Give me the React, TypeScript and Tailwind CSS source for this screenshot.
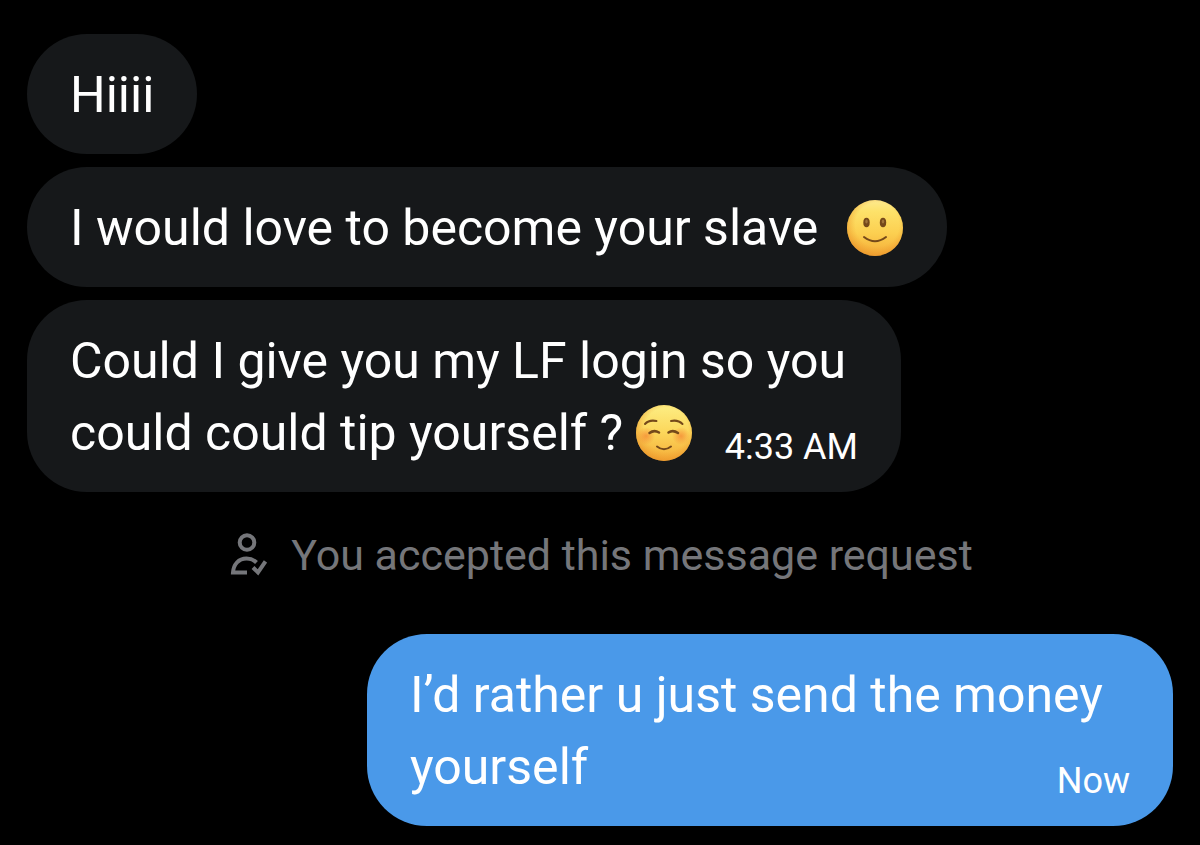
import type { ReactNode } from "react";
import clsx from "clsx";

type BubbleProps = {
  children: ReactNode;
  className?: string;
  outgoing?: boolean;
};

function Bubble({ children, className, outgoing = false }: BubbleProps) {
  return (
    <li
      className={clsx(
        "max-w-full rounded-[60px] px-[43px] pt-[25px] pb-[23px] text-[50px] leading-[72px] text-white",
        outgoing ? "self-end bg-[#4a99e9]" : "self-start bg-[#16181a]",
        className,
      )}
    >
      {children}
    </li>
  );
}

function SmileEmoji() {
  return (
    <svg viewBox="0 0 58 58" className="size-[58px] shrink-0" role="img" aria-label="Slightly smiling face">
      <defs>
        <linearGradient id="smile-face" x1="0" y1="0" x2="0" y2="1">
          <stop offset="0" stopColor="#fdea90" />
          <stop offset="0.2" stopColor="#fde26a" />
          <stop offset="0.6" stopColor="#fccf50" />
          <stop offset="1" stopColor="#f4ac38" />
        </linearGradient>
        <radialGradient id="smile-edge" cx="0.54" cy="0.44" r="0.6">
          <stop offset="0.65" stopColor="#ee9a2c" stopOpacity="0" />
          <stop offset="1" stopColor="#e88a24" stopOpacity="0.7" />
        </radialGradient>
      </defs>
      <circle cx="29" cy="29" r="28" fill="url(#smile-face)" />
      <circle cx="29" cy="29" r="28" fill="url(#smile-edge)" />
      <ellipse cx="20.5" cy="23.5" rx="3.2" ry="4.8" fill="#75491a" />
      <ellipse cx="37" cy="23.5" rx="3.2" ry="4.8" fill="#75491a" />
      <ellipse cx="20.5" cy="22.5" rx="1.2" ry="2" fill="#a0743a" />
      <ellipse cx="37" cy="22.5" rx="1.2" ry="2" fill="#a0743a" />
      <path d="M18 38 Q29 46.5 40 38" fill="none" stroke="#75491a" strokeWidth="2" strokeLinecap="round" />
    </svg>
  );
}

function BlushEmoji() {
  return (
    <svg viewBox="0 0 58 58" className="size-[58px] shrink-0" role="img" aria-label="Smiling face">
      <defs>
        <linearGradient id="blush-face" x1="0" y1="0" x2="0" y2="1">
          <stop offset="0" stopColor="#fdee84" />
          <stop offset="0.5" stopColor="#fcd65a" />
          <stop offset="1" stopColor="#f4ac38" />
        </linearGradient>
        <radialGradient id="blush-edge" cx="0.54" cy="0.44" r="0.6">
          <stop offset="0.65" stopColor="#ee9a2c" stopOpacity="0" />
          <stop offset="1" stopColor="#e88a24" stopOpacity="0.7" />
        </radialGradient>
        <radialGradient id="blush-cheek">
          <stop offset="0" stopColor="#f2762c" stopOpacity="0.6" />
          <stop offset="1" stopColor="#f2762c" stopOpacity="0" />
        </radialGradient>
      </defs>
      <circle cx="29" cy="29" r="28" fill="url(#blush-face)" />
      <circle cx="29" cy="29" r="28" fill="url(#blush-edge)" />
      <circle cx="11" cy="32" r="9" fill="url(#blush-cheek)" />
      <circle cx="46" cy="32" r="9" fill="url(#blush-cheek)" />
      <g fill="none" stroke="#75491a" strokeWidth="2" strokeLinecap="round">
        <path d="M10 20 Q14 15.5 21.5 17" />
        <path d="M36 17 Q43 15.5 47.5 20" />
        <path d="M14.5 29 Q19 25.5 24 28.5" strokeWidth="2.5" />
        <path d="M33.5 28.5 Q38 25.5 43 29" strokeWidth="2.5" />
        <path d="M22 42.5 Q29 48 36 42.5" />
      </g>
    </svg>
  );
}

function AcceptedIcon() {
  return (
    <svg viewBox="0 0 40 44" className="h-11 w-10 shrink-0" fill="none" stroke="currentColor" strokeWidth="4" aria-hidden="true">
      <circle cx="20" cy="9.5" r="7.3" />
      <path d="M20 39.5 H6 C6.5 31.5 11.5 25.5 19.5 25.5 C23.5 25.5 26.5 26.5 29.5 29.5" />
      <path d="M26 34.5 L31 39.5 L38.5 28.5" />
    </svg>
  );
}

function Timestamp({ children }: { children: ReactNode }) {
  return <time className="mt-7 whitespace-nowrap text-[36px] leading-[44px]">{children}</time>;
}

export default function App() {
  return (
    <main className="min-h-screen bg-black px-[27px] pt-[34px] pb-[19px] font-[Roboto,sans-serif]">
      <ul className="flex flex-col gap-[13px]">
        <Bubble>Hiiii</Bubble>
        <Bubble className="flex items-center gap-7">
          I would love to become your slave
          <SmileEmoji />
        </Bubble>
        <Bubble className="w-[874px]">
          <p>Could I give you my LF login so you</p>
          <div className="flex items-center justify-between">
            <p className="flex items-center gap-3">
              could could tip yourself ?
              <BlushEmoji />
            </p>
            <Timestamp>4:33 AM</Timestamp>
          </div>
        </Bubble>
        <li className="flex items-center justify-center gap-6 pt-[18px] pb-[34px] text-[43px] leading-[64px] text-[#75767a]">
          <AcceptedIcon />
          You accepted this message request
        </li>
        <Bubble outgoing className="w-[806px]">
          <p>I’d rather u just send the money</p>
          <div className="flex items-center justify-between">
            <p>yourself</p>
            <Timestamp>Now</Timestamp>
          </div>
        </Bubble>
      </ul>
    </main>
  );
}
